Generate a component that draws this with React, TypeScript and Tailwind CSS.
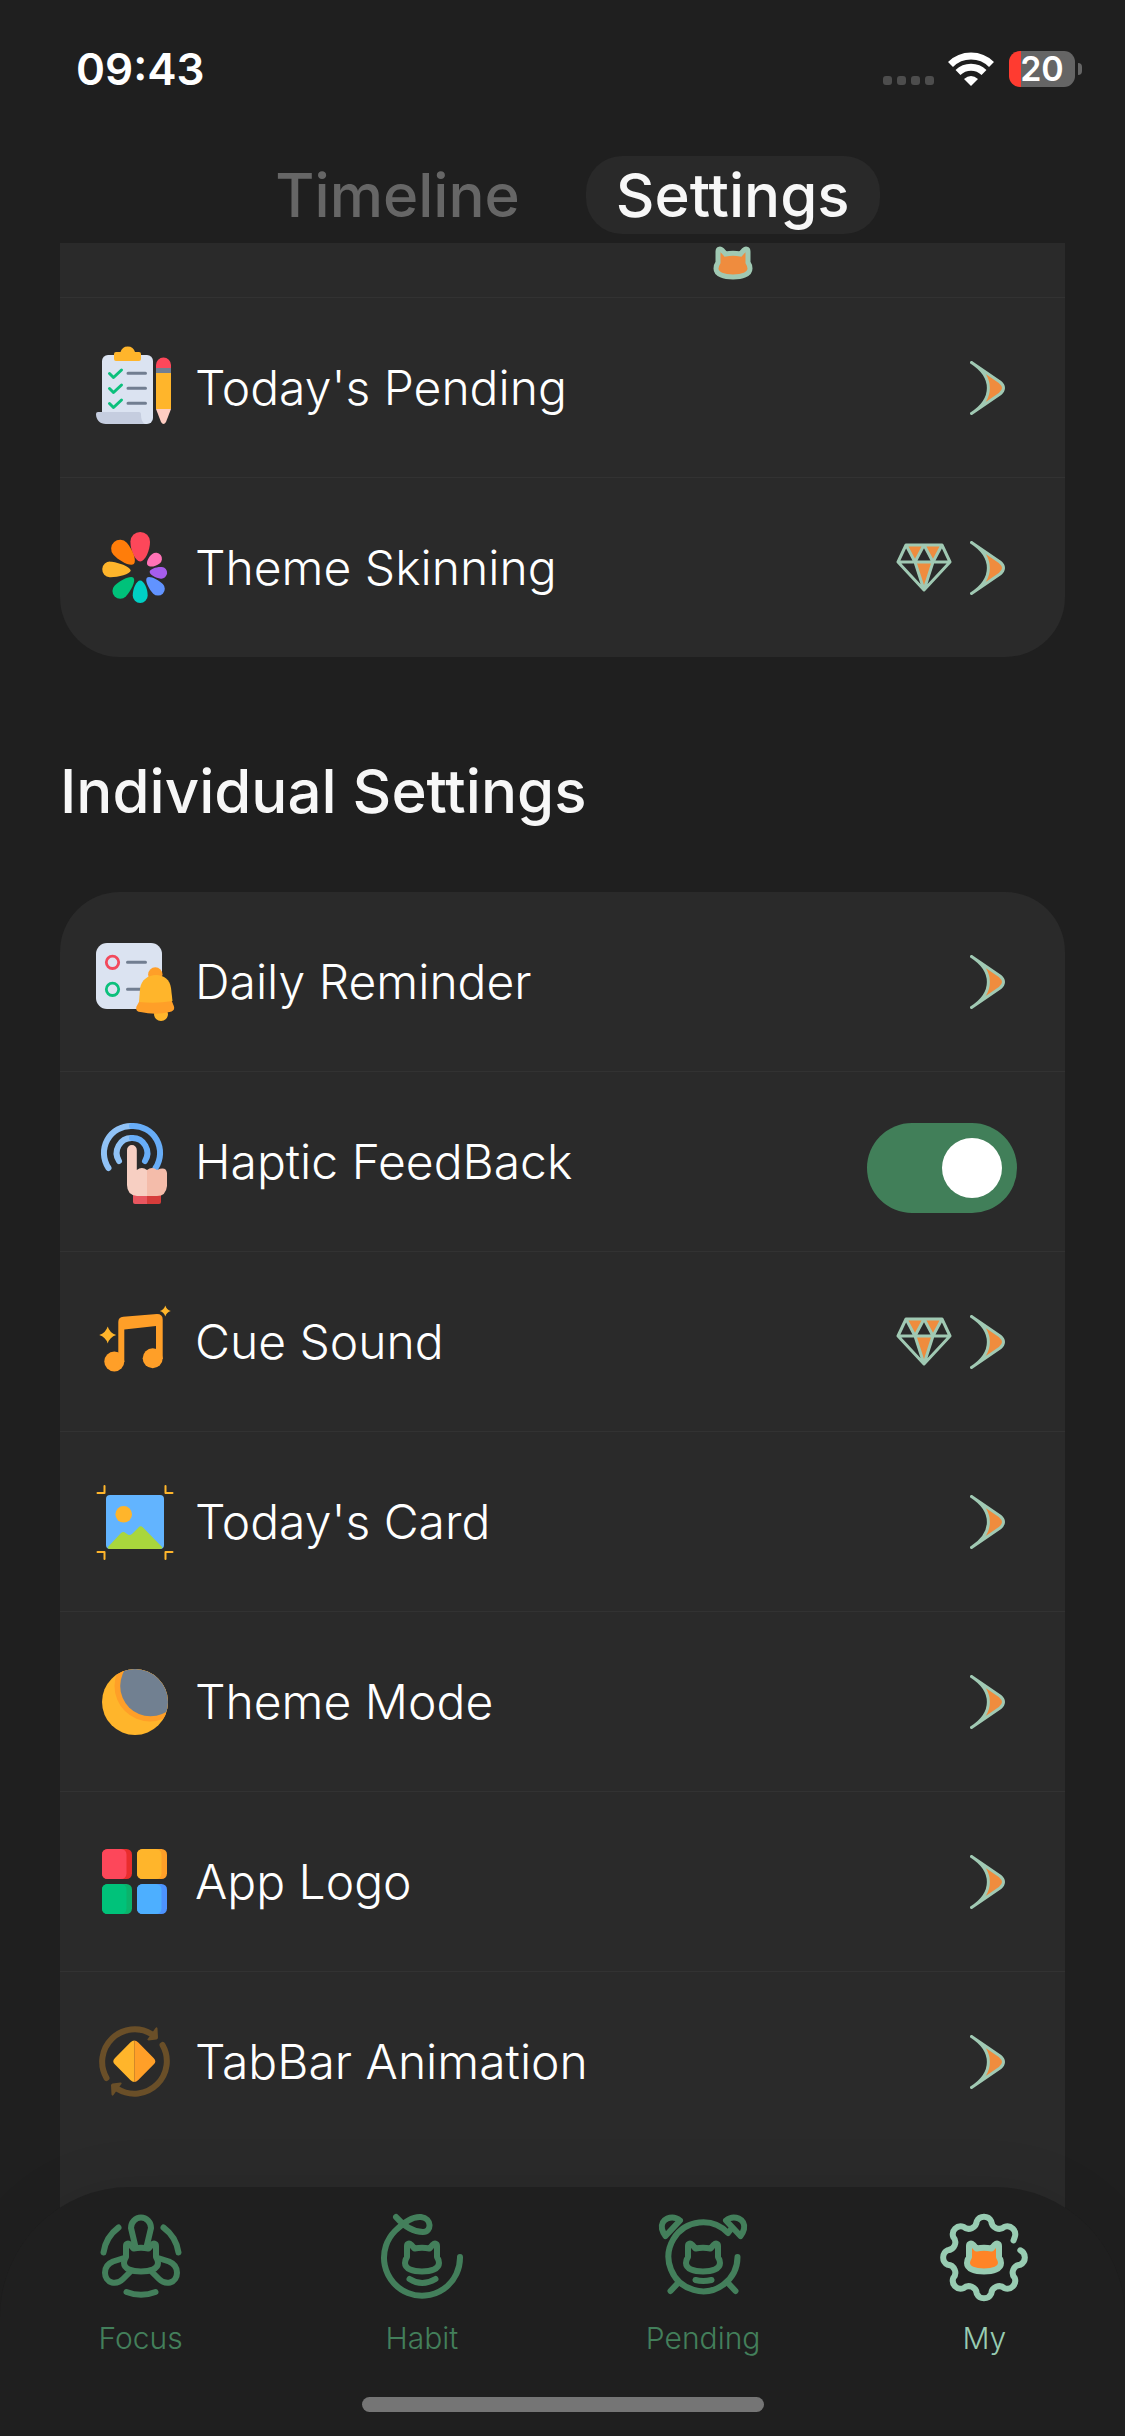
import { useState, type ReactNode } from 'react';

const CAT_PATH =
  'M30 34c0-3 2.500-3 4-1.500l3.500 4q7.500-1.500 15 0l3.500-4c1.500-1.500 4-1.500 4 1.500v11q2 3 2 6c0 6-8 8.500-17 8.500s-17-2.500-17-8.500q0-3 2-6z';

function polar(cx: number, cy: number, r: number, deg: number) {
  const a = (deg * Math.PI) / 180;
  return `${(cx + r * Math.cos(a)).toFixed(2)} ${(cy + r * Math.sin(a)).toFixed(2)}`;
}

// Eight-lobed ring, open between the right and the upper right lobe.
function scallopPath() {
  let d = `M${polar(45, 45.5, 37, -11.25)}`;
  for (let i = 0; i < 15; i++) {
    const sweep = i % 2 === 0 ? 1 : 0;
    d += `A8 8 0 0 ${sweep} ${polar(45, 45.5, 37, 11.25 + i * 22.5)}`;
  }
  return `${d}L74.500 28.500`;
}

function ListIcon({ children }: { children: ReactNode }) {
  return (
    <svg viewBox="0 0 80 84" className="h-[84px] w-20 shrink-0" aria-hidden="true">
      {children}
    </svg>
  );
}

function PendingIcon() {
  return (
    <ListIcon>
      <rect x="7" y="9" width="51" height="69" rx="6" fill="#dbe3f1" />
      <path d="M1 68q0-2 2-2h41q2 0 2 2c0 5 1 8 4 10H11C5 78 1 74 1 68z" fill="#c5cddf" />
      <path d="M21 6h4.500a7.500 7.500 0 0 1 14.500 0H44q2 0 2 2v5q0 2-2 2H21q-2 0-2-2V8q0-2 2-2z" fill="#ffb52b" />
      <path
        d="M14.500 27.500l4 4 8-7.500M14.500 42.500l4 4 8-7.500M14.500 57.500l4 4 8-7.500"
        fill="none"
        stroke="#0bc07c"
        strokeWidth="3"
        strokeLinecap="round"
        strokeLinejoin="round"
      />
      <path d="M33 27.300h17.500M33 42.300h17.500M33 57.300h17.500" stroke="#717e91" strokeWidth="3" strokeLinecap="round" />
      <path d="M61 22v-3a7.500 7.500 0 0 1 15 0v3z" fill="#fd475a" />
      <path d="M61 22h15v5H61z" fill="#717e91" />
      <path d="M61 27h15v36H61z" fill="#ffb52b" />
      <path d="M61 63h15l-5 13q-2.500 4-5 0z" fill="#ffcdc2" />
    </ListIcon>
  );
}

const petals = [
  { angle: 0, reach: 39, half: 9.8, fill: '#fd475a' },
  { angle: 52, reach: 26, half: 6, fill: '#ff73b6' },
  { angle: 95, reach: 27, half: 5.8, fill: '#a65dec' },
  { angle: 135, reach: 32, half: 6.8, fill: '#6193ff' },
  { angle: 180, reach: 32, half: 7.5, fill: '#00cfc4' },
  { angle: 225, reach: 36, half: 7.8, fill: '#00c27a' },
  { angle: 273, reach: 38, half: 7.8, fill: '#ffb52b' },
  { angle: 318, reach: 39, half: 9, fill: '#ff7d0a' },
];

function SkinIcon() {
  return (
    <ListIcon>
      {petals.map(({ angle, reach, half, fill }) => (
        <path
          key={angle}
          transform={`translate(45.2 45) rotate(${angle})`}
          d={`M0-9.500C${-half * 0.5}-9.500 ${-half}${-(reach - half * 1.9)} ${-half}${-(reach - half)}A${half} ${half} 0 0 1 ${half}${-(reach - half)}C${half}${-(reach - half * 1.9)} ${half * 0.5}-9.500 0-9.500z`}
          fill={fill}
        />
      ))}
    </ListIcon>
  );
}

function ReminderIcon() {
  return (
    <ListIcon>
      <rect x="1" y="3" width="66" height="66" rx="11" fill="#dbe3f1" />
      <circle cx="17.500" cy="22.300" r="6.200" fill="none" stroke="#f2495c" strokeWidth="2.800" />
      <circle cx="17.500" cy="49.300" r="6.200" fill="none" stroke="#0bc07c" strokeWidth="2.800" />
      <path d="M32.500 22.300h18M32.500 49.300H46" stroke="#717e91" strokeWidth="3" strokeLinecap="round" />
      <circle cx="60.300" cy="34.500" r="7.200" fill="#ff9f28" />
      <circle cx="66" cy="74" r="7" fill="#ffb52b" />
      <path d="M44.500 61l-3 5.500q-1.500 5 4 5.500 15 3.500 29 0 6-1 4.300-6L76 59z" fill="#ff9f28" />
      <path d="M44 62L45 49c1-9 8-14 16-14s14 5 15 13l1.500 13q-16 3-33.500 1z" fill="#ffb52b" />
    </ListIcon>
  );
}

function HapticIcon() {
  return (
    <ListIcon>
      <g fill="none" strokeWidth="6" strokeLinecap="round">
        <path d="M13.500 48A27 27 0 0 1 37 6M24 41A15 15 0 0 1 37 18" stroke="#90c2f6" />
        <path d="M60.500 48A27 27 0 0 0 37 6M50 41A15 15 0 0 0 37 18" stroke="#68adf7" />
      </g>
      <path d="M38 75h14v9H40q-2 0-2-2z" fill="#e8565f" />
      <path d="M52 75h14v7q0 2-2 2H52z" fill="#d63c3a" />
      <path d="M52 50v26H42q-10-1-10-11V30a4.900 4.900 0 0 1 9.800 0v20q5-4 10.200 0z" fill="#f7cfc2" />
      <path d="M52 50q5-4 10 0 9-4 10 3v13q-1 10-10 10H52z" fill="#f4bcaa" />
    </ListIcon>
  );
}

function SoundIcon() {
  return (
    <ListIcon>
      <g fill="#ff9f28">
        <circle cx="19.300" cy="61.500" r="10" />
        <circle cx="57.700" cy="58.200" r="10" />
        <path d="M23.300 54V22q0-5 5-5.300L62 14q5.700 0 5.700 5.500V59H61V26l-31.700 3.500V62h-6z" />
      </g>
      <path
        d="M12.700 26.500q2 6.500 8.500 8.500-6.500 2-8.500 8.500-2-6.500-8.500-8.500 6.500-2 8.500-8.500zM70.300 5.500q1.300 4.200 5.500 5.500-4.200 1.300-5.500 5.500-1.300-4.200-5.500-5.500 4.200-1.300 5.500-5.500z"
        fill="#ffb52b"
      />
    </ListIcon>
  );
}

function PictureIcon() {
  return (
    <ListIcon>
      <rect x="11" y="15" width="58" height="54" rx="4" fill="#62b4ff" />
      <circle cx="28.700" cy="34.300" r="8.300" fill="#ffb52b" />
      <path d="M12.500 67.500L26 53q2.500-2 4.500 0l3 2q2 .500 4-1.500l6-6q2-2.500 4.500 0l19.500 20q-1 1.500-3 1.500H15q-1.500 0-2.500-1.500z" fill="#a9d63c" />
      <path
        d="M2.500 13H9.500V6M77.500 13H70.500V6M2.500 72H9.500V79M77.500 72H70.500V79"
        fill="none"
        stroke="#ffb52b"
        strokeWidth="2"
        strokeLinecap="round"
        strokeLinejoin="round"
      />
    </ListIcon>
  );
}

function MoonIcon() {
  return (
    <ListIcon>
      <clipPath id="moon-disc">
        <circle cx="40" cy="42" r="33" />
      </clipPath>
      <g clipPath="url(#moon-disc)">
        <path d="M0 0h80v84H0z" fill="#ffb52b" />
        <circle cx="55" cy="26" r="35.500" fill="#ff9f28" />
        <circle cx="55.500" cy="26" r="30.300" fill="#718091" />
      </g>
    </ListIcon>
  );
}

const tiles = [
  { x: 7, y: 9, fill: '#fd475a', edge: '#e92d2d' },
  { x: 42, y: 9, fill: '#ffb52b', edge: '#ff9f28' },
  { x: 7, y: 44, fill: '#00c27a', edge: '#0bb36b' },
  { x: 42, y: 44, fill: '#4dafff', edge: '#4d93ff' },
];

function LogoIcon() {
  return (
    <ListIcon>
      {tiles.map((t) => (
        <g key={`${t.x}-${t.y}`}>
          <rect x={t.x} y={t.y} width="30" height="30" rx="5.500" fill={t.edge} />
          <rect x={t.x} y={t.y} width="24.500" height="30" rx="5.500" fill={t.fill} />
        </g>
      ))}
    </ListIcon>
  );
}

function AnimationIcon() {
  return (
    <ListIcon>
      <path
        d="M11.500 58A32.500 32.500 0 0 1 56.500 14M67.500 25A32.500 32.500 0 0 1 22.500 69"
        fill="none"
        stroke="#6a4f28"
        strokeWidth="6"
        strokeLinecap="round"
      />
      <path
        d="M60.500 8q1.500-1.500 2 .500l.500 9q0 1.500-1.500 2l-8 1q-2-.500-.500-2zM18.500 75q-1.500 1.500-2-.500l-.500-9q0-1.500 1.500-2l8-1q2 .500.500 2z"
        fill="#6a4f28"
      />
      <path d="M39.300 20.600q-2 0-4 2L20 38q-3.500 3.300 0 6.600L35.300 60q2 2 4 2z" fill="#ffb52b" />
      <path d="M39.300 20.600q2 0 4 2L58.600 38q3.500 3.300 0 6.600L43.300 60q-2 2-4 2z" fill="#ff9f28" />
    </ListIcon>
  );
}

function Chevron() {
  return (
    <svg viewBox="0 0 36 54" className="h-[54px] w-9 shrink-0" aria-hidden="true">
      <path
        d="M1.500 1.500L30 21q7 6 0 12L1.500 52.500C24 38 24 16 1.500 1.500z"
        fill="#ef8c3e"
        stroke="#a0c9b3"
        strokeWidth="3"
        strokeLinejoin="round"
      />
    </svg>
  );
}

function Diamond() {
  return (
    <svg viewBox="0 0 56 50" className="h-[50px] w-14 shrink-0" aria-label="Premium">
      <path d="M10 2h36l-9 17-9 28-9-28z" fill="#ef8c3e" />
      <path d="M28 2l9 17H19z" fill="#2a2a2a" />
      <path
        d="M10 2h36l8 17-26 28L2 19zM2 19h52M10 2l9 17 9-17 9 17 9-17M19 19l9 28 9-28"
        fill="none"
        stroke="#a0c9b3"
        strokeWidth="3"
        strokeLinejoin="round"
      />
    </svg>
  );
}

function TabIcon({ children }: { children: ReactNode }) {
  return (
    <svg
      viewBox="0 0 90 90"
      className="size-[90px]"
      fill="none"
      stroke="currentColor"
      strokeWidth="6"
      strokeLinecap="round"
      strokeLinejoin="round"
      aria-hidden="true"
    >
      {children}
    </svg>
  );
}

function FocusIcon() {
  return (
    <TabIcon>
      <path d={CAT_PATH} />
      <path d="M39.500 35L35 16a10 10.500 0 1 1 20 0L50.500 35" />
      <path d="M28 46l-11 3.500C6 54 7 68 16 70.500c4 1 8-.500 11-3.500l7-7M62 46l11 3.500C84 54 83 68 74 70.500c-4 1-8-.500-11-3.500l-7-7" />
      <path d="M22.500 15.500A38 38 0 0 0 7.500 40.500M67.500 15.500A38 38 0 0 1 82.500 40.500M30.500 80a40 40 0 0 0 29 0" />
    </TabIcon>
  );
}

function HabitIcon() {
  return (
    <TabIcon>
      <path d={CAT_PATH} />
      <path d="M83 45A38 38 0 1 1 18 19C25 12 34 4 44 5 55 6 55 20 46 20 34 20 26 13 19 5" />
      <path d="M32.500 67q12.500 8 26 0" />
    </TabIcon>
  );
}

function AlarmIcon() {
  return (
    <TabIcon>
      <path d={CAT_PATH} />
      <path d="M79.500 45A34.500 34.500 0 1 1 70 21l4-5" />
      <path d="M68 8.500C76 2 88 7 86 17q-1 4-3.500 7zM22 8.500C14 2 2 7 4 17q1 4 3.500 7z" />
      <path d="M37.500 68q7.500 2 16 0M20 71l-7.500 8M70 71l7.500 8" />
    </TabIcon>
  );
}

function MyIcon() {
  return (
    <TabIcon>
      <path d={CAT_PATH} fill="#ff8426" />
      <path d={scallopPath()} />
    </TabIcon>
  );
}

type Setting = {
  label: string;
  icon: ReactNode;
  premium?: boolean;
  toggle?: boolean;
};

const generalSettings: Setting[] = [
  { label: "Today's Pending", icon: <PendingIcon /> },
  { label: 'Theme Skinning', icon: <SkinIcon />, premium: true },
];

const individualSettings: Setting[] = [
  { label: 'Daily Reminder', icon: <ReminderIcon /> },
  { label: 'Haptic FeedBack', icon: <HapticIcon />, toggle: true },
  { label: 'Cue Sound', icon: <SoundIcon />, premium: true },
  { label: "Today's Card", icon: <PictureIcon /> },
  { label: 'Theme Mode', icon: <MoonIcon /> },
  { label: 'App Logo', icon: <LogoIcon /> },
  { label: 'TabBar Animation', icon: <AnimationIcon /> },
];

const navItems = [
  { label: 'Focus', icon: <FocusIcon /> },
  { label: 'Habit', icon: <HabitIcon /> },
  { label: 'Pending', icon: <AlarmIcon /> },
  { label: 'My', icon: <MyIcon /> },
];

function SettingRow({ label, icon, premium, toggle }: Setting) {
  const [on, setOn] = useState(true);

  if (toggle) {
    return (
      <li className="border-b border-[#323232] last:border-0">
        <label className="flex h-[179px] items-center gap-5 pr-12 pl-[35px]">
          {icon}
          <span className="flex-1">{label}</span>
          <input
            type="checkbox"
            role="switch"
            checked={on}
            onChange={(e) => setOn(e.target.checked)}
            className="mt-3 flex h-[90px] w-[150px] appearance-none items-center rounded-full bg-[#4a4a4a] px-[15px] before:size-[60px] before:rounded-full before:bg-white checked:justify-end checked:bg-[#417f59]"
          />
        </label>
      </li>
    );
  }

  return (
    <li className="border-b border-[#323232] last:border-0">
      <button type="button" className="flex h-[179px] w-full items-center gap-5 pr-[59px] pl-[35px] text-left">
        {icon}
        <span className="flex-1">{label}</span>
        <span className="flex items-center gap-[18px]">
          {premium && <Diamond />}
          <Chevron />
        </span>
      </button>
    </li>
  );
}

function StatusBar() {
  return (
    <div className="flex h-[138px] items-center justify-between pr-[43px] pl-[76px]">
      <span className="text-[44px] font-semibold">09:43</span>
      <div className="flex h-9 items-center">
        <div className="mr-3.5 mb-0.5 flex gap-[5px] self-end">
          {[0, 1, 2, 3].map((n) => (
            <span key={n} className="size-[9px] rounded-[3px] bg-[#4d4d4d]" />
          ))}
        </div>
        <svg viewBox="0 0 46 34" className="mr-[15px] h-[34px] w-[46px]" aria-label="Wi-Fi">
          <g fill="none" stroke="#fff" strokeWidth="7">
            <path d="M2.500 12.500a29 29 0 0 1 41 0" />
            <path d="M10 20.500a18.500 18.500 0 0 1 26 0" />
          </g>
          <path d="M23 34l-7-7q7-6 14 0z" fill="#fff" />
        </svg>
        <div className="flex h-9 w-[66px] items-center justify-center rounded-[11px] bg-linear-to-r from-[#ff3b30] from-18% to-[#656565] to-18% text-[34px] leading-9 font-semibold">
          20
        </div>
        <span className="ml-[3px] h-3 w-1 rounded-r-full bg-[#656565]" />
      </div>
    </div>
  );
}

export default function App() {
  const [tab, setTab] = useState('Settings');
  const [active, setActive] = useState('My');

  return (
    <div className="flex min-h-screen flex-col bg-[#1f1f1f] font-['Inter','Liberation_Sans',sans-serif] text-white">
      <header>
        <StatusBar />
        <div className="flex justify-center gap-9 pt-[18px] pb-[9px]">
          {['Timeline', 'Settings'].map((name) => (
            <button
              key={name}
              type="button"
              onClick={() => setTab(name)}
              className={`h-[78px] rounded-[36px] px-[30px] text-[60px] leading-[78px] font-medium ${
                tab === name ? 'bg-[#292929] text-[#f7f7f7]' : 'text-[#666666]'
              }`}
            >
              {name}
            </button>
          ))}
        </div>
      </header>

      <main className="flex-1 px-[60px] text-[48px] font-[350]">
        <section className="rounded-b-[60px] bg-[#2a2a2a]">
          <div className="flex h-[55px] border-b border-[#323232] pt-[3px]">
            <svg viewBox="25 28.500 40 34" className="ml-[65%] h-[34px] w-10" aria-hidden="true">
              <path d={CAT_PATH} fill="#ef8c3e" stroke="#a0c9b3" strokeWidth="5" />
            </svg>
          </div>
          <ul>
            {generalSettings.map((s) => (
              <SettingRow key={s.label} {...s} />
            ))}
          </ul>
        </section>

        <h2 className="mt-[98px] mb-[65px] text-[60px] leading-[72px] font-medium text-[#f7f7f7]">
          Individual Settings
        </h2>

        <section className="rounded-t-[60px] bg-[#2a2a2a] pb-[85px]">
          <ul>
            {individualSettings.map((s) => (
              <SettingRow key={s.label} {...s} />
            ))}
          </ul>
        </section>
      </main>

      <nav className="sticky bottom-0 -mt-[50px] rounded-t-[130px] bg-[#1f1f1f] pt-[25px] pb-6 shadow-[0_0_60px_rgba(0,0,0,0.08)]">
        <div className="grid grid-cols-4">
          {navItems.map((item) => (
            <button
              key={item.label}
              type="button"
              onClick={() => setActive(item.label)}
              className={`flex flex-col items-center gap-4 text-[30px] leading-10 font-[350] ${
                active === item.label ? 'text-[#98ccb2]' : 'text-[#437f5b]'
              }`}
            >
              {item.icon}
              {item.label}
            </button>
          ))}
        </div>
        <div className="mx-auto mt-[39px] h-[15px] w-[402px] rounded-full bg-[#757575]" />
      </nav>
    </div>
  );
}
